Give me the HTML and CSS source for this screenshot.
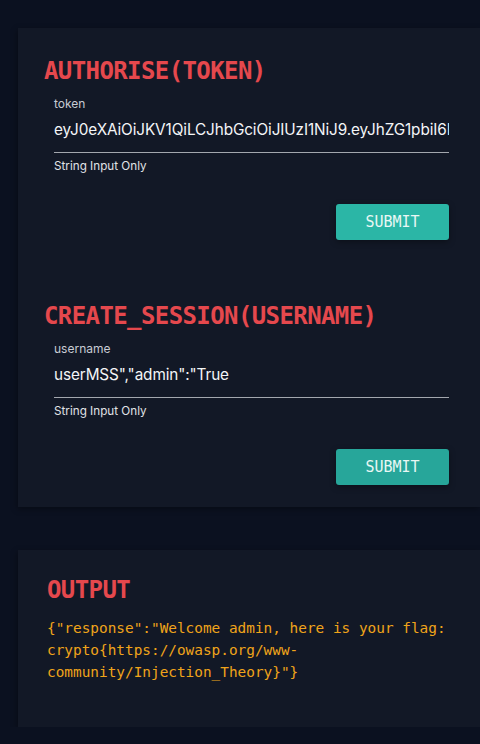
FILE: index.html
```html
<!DOCTYPE html>
<html lang="en">
<head>
    <meta charset="UTF-8">
    <title>Session</title>
<link rel="stylesheet" href="styles.css">
</head>
<body class="page">
<div class="card">
    <div class="section">
        <h2 class="title">AUTHORISE(TOKEN)</h2>
        <div class="field">
            <label class="label" for="token">token</label>
            <input class="input" id="token" type="text" value="eyJ0eXAiOiJKV1QiLCJhbGciOiJIUzI1NiJ9.eyJhZG1pbiI6IlRydWUiLCJ1c2VybmFtZSI6InVzZXJNU1MifQ.c2lnbmF0dXJl">
            <p class="hint">String Input Only</p>
        </div>
        <div class="actions">
            <button class="submit" type="button">SUBMIT</button>
        </div>
    </div>
    <div class="section second">
        <h2 class="title">CREATE_SESSION(USERNAME)</h2>
        <div class="field">
            <label class="label" for="username">username</label>
            <input class="input" id="username" type="text" value='userMSS","admin":"True'>
            <p class="hint">String Input Only</p>
        </div>
        <div class="actions">
            <button class="submit dark" type="button">SUBMIT</button>
        </div>
    </div>
</div>
<div class="card output">
    <h2 class="title">OUTPUT</h2>
    <p class="result">{"response":"Welcome admin, here is your flag: crypto{https://owasp.org/www-community/Injection_Theory}"}</p>
</div>
</body>
</html>
```

FILE: styles.css
```css
.page{
    margin: 0;
    background-color: #0b1120;
    overflow-x: hidden;
    font-family: Inter, "Noto Sans", sans-serif;
}
.card
{
    background-color: #121826;
    margin: 28px 0 0 18px;
    padding: 29px 31px 22px 26px;
    box-shadow: -1px 2px 6px rgba(0, 0, 0, 0.35);
}
.section.second{
    margin-top: 62px;
}
.title{
    margin: 0;
    font-family: "DejaVu Sans Mono", monospace;
    font-weight: bold;
    font-size: 24px;
    letter-spacing: -0.6px;
    line-height: 28px;
    color: #e5484d;
}
.field{
    padding-left: 10px;
    margin-top: 11px;
}
.label{
    display: block;
    font-size: 12px;
    line-height: 16px;
    color: #c8ccd4;
}
.input{
    display: block;
    box-sizing: content-box;
    width: 100%;
    height: 20px;
    margin: 8px 0 0 0;
    padding: 0 0 12px 0;
    border: none;
    border-bottom: 1px solid #a3a7ae;
    background: transparent;
    outline: none;
    font-family: Inter, "Noto Sans", sans-serif;
    font-size: 15.3px;
    letter-spacing: -0.1px;
    line-height: 20px;
    color: #f4f5f7;
}
.hint{
    margin: 5px 0 0 0;
    font-size: 11.7px;
    line-height: 16px;
    color: #e0e2e6;
}
.actions{
    display: flex;
    justify-content: flex-end;
    margin-top: 30px;
}
.submit{
    width: 113px;
    height: 36px;
    border: none;
    border-radius: 3px;
    background-color: #2bb6a6;
    color: #e9f7f4;
    font-family: "DejaVu Sans Mono", monospace;
    font-size: 15px;
    box-shadow: 0 2px 6px rgba(0, 0, 0, 0.35);
}
.submit.dark{
    background-color: #27a69a;
}
.output{
    margin-top: 43px;
    padding: 26px 31px 44px 29px;
}
.result{
    margin: 13px 0 0 0;
    font-family: "DejaVu Sans Mono", monospace;
    font-size: 14.4px;
    line-height: 22px;
    color: #f0a41a;
}
```
